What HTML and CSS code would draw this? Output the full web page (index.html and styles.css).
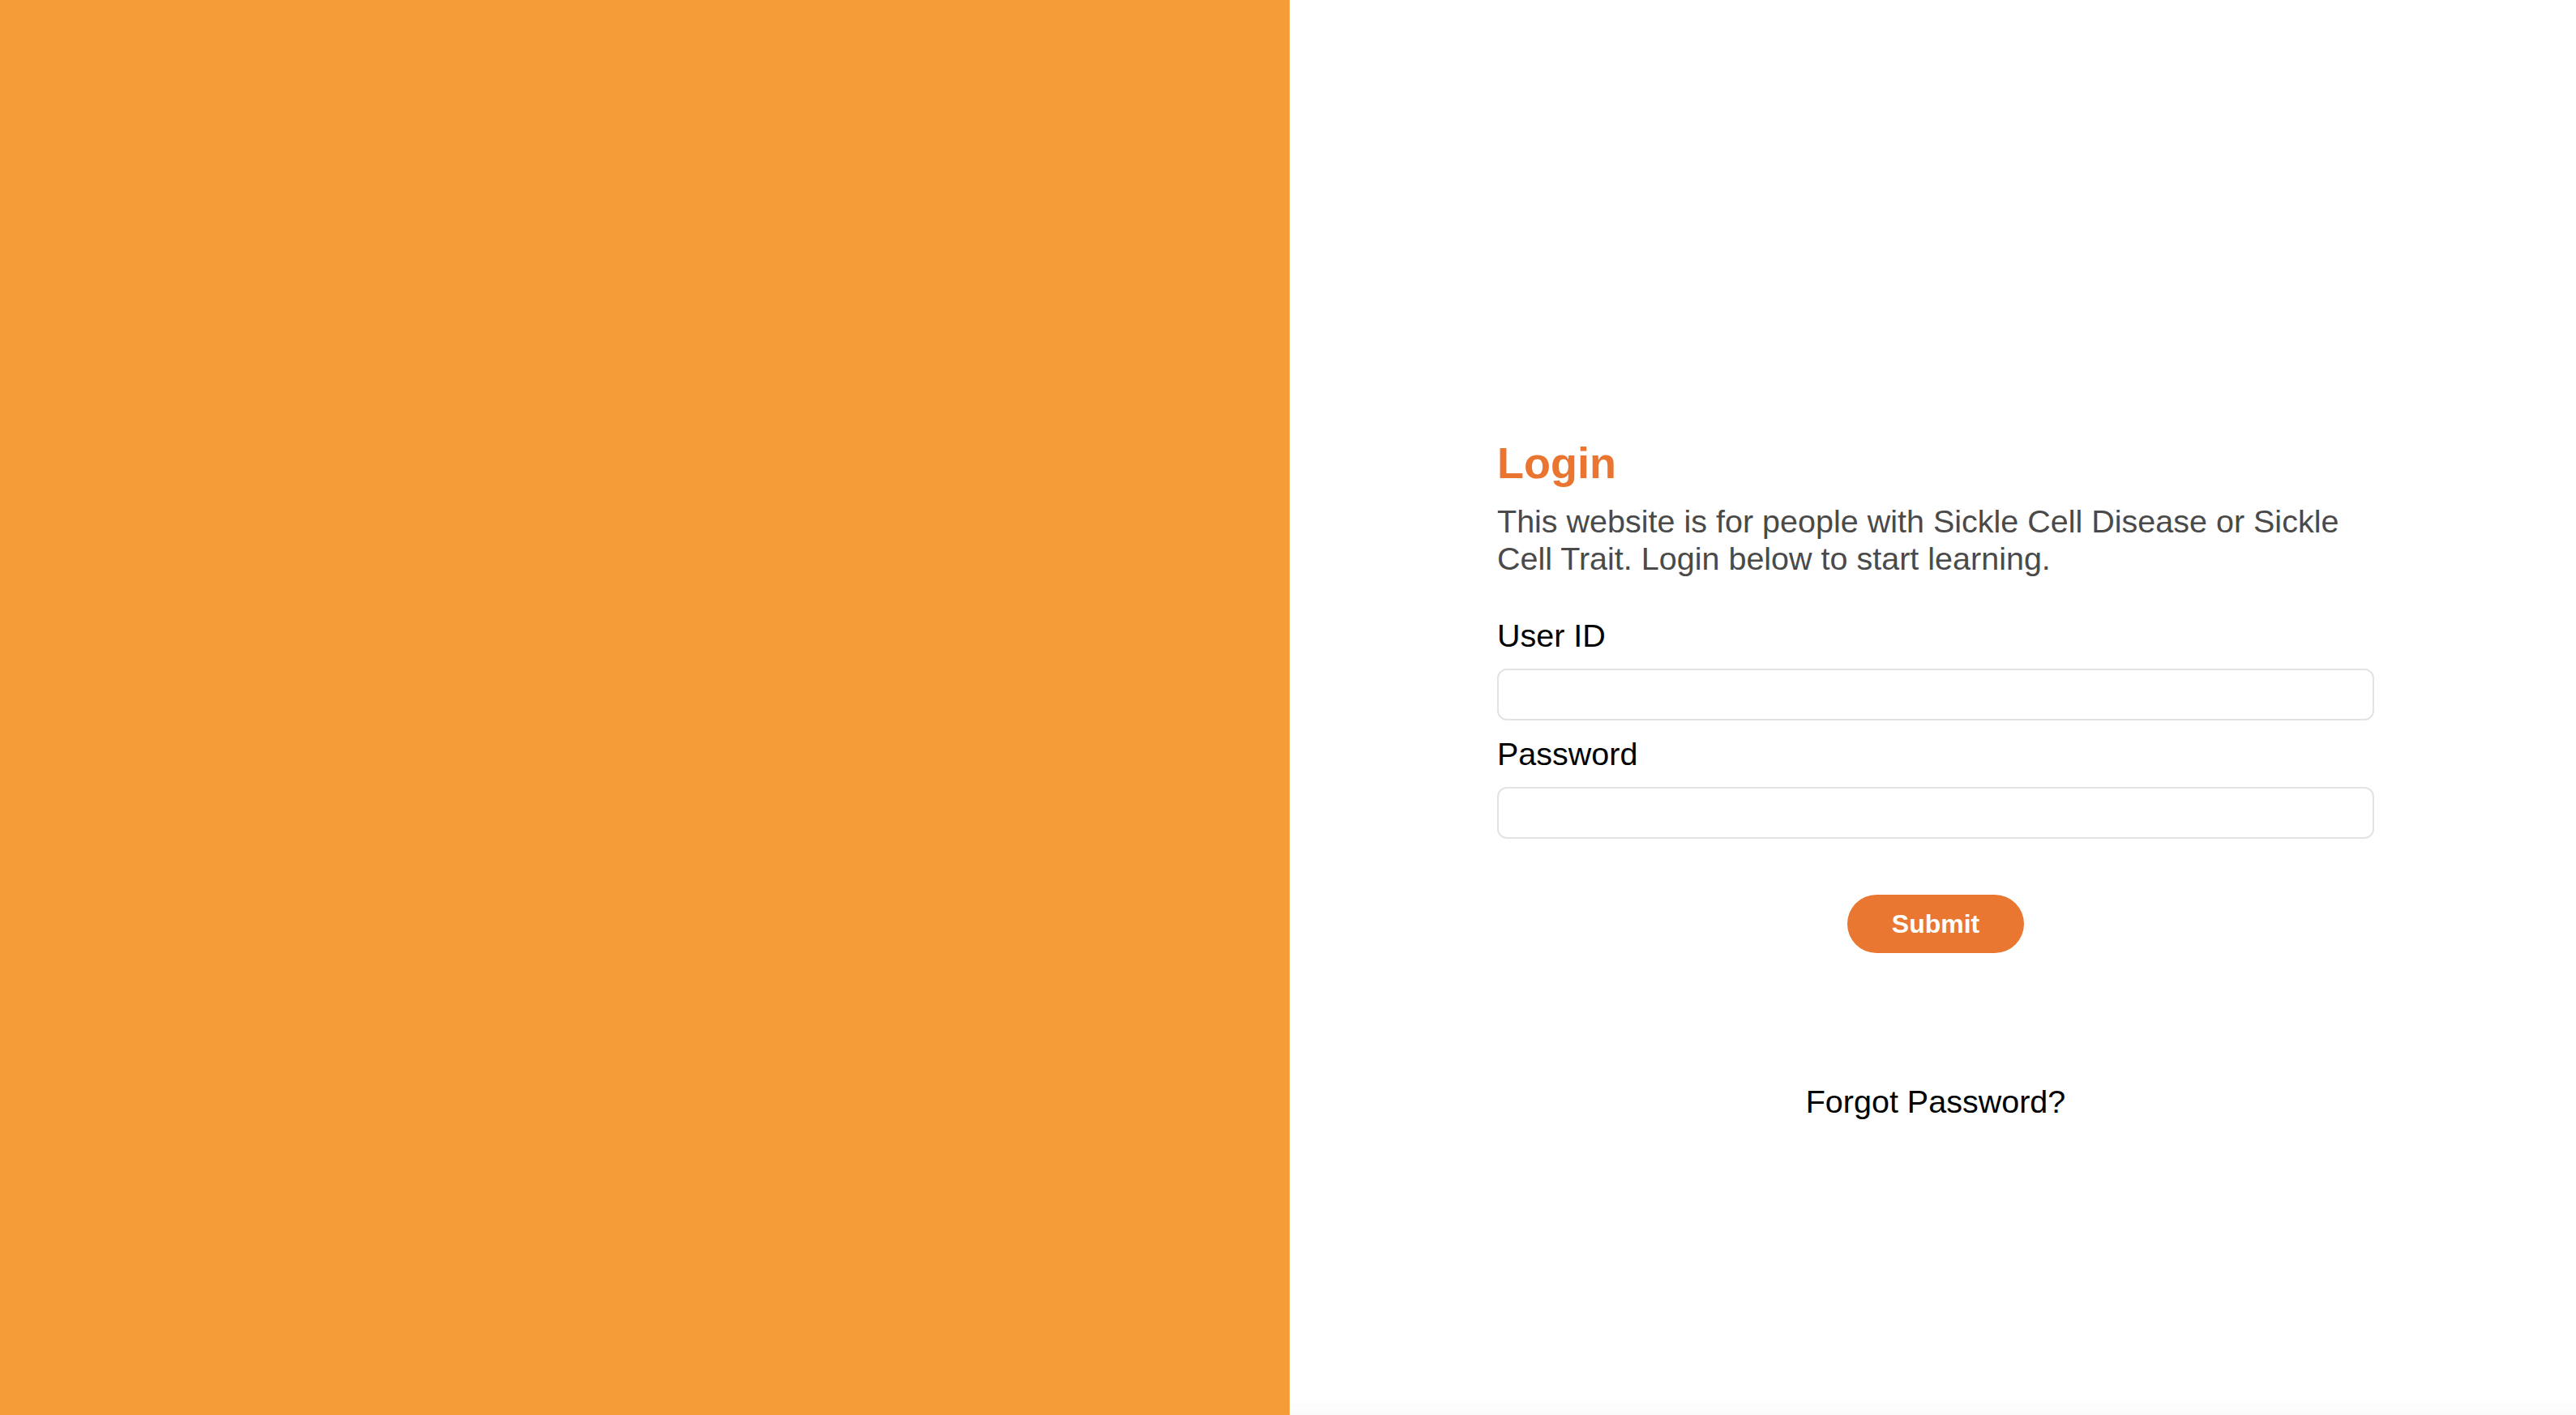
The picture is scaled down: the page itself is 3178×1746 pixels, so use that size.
FILE: index.html
```html
<!DOCTYPE html>
<html lang="en">
<head>
<meta charset="utf-8">
<title>Login</title>
<link rel="stylesheet" href="styles.css">
</head>
<body>
<div class="page">
  <div class="side"></div>
  <main class="panel">
    <form class="login">
      <h2 class="title">Login</h2>
      <p class="intro">This website is for people with Sickle Cell Disease or Sickle Cell Trait. Login below to start learning.</p>
      <label class="label label-first" for="uid">User ID</label>
      <input class="field" id="uid" type="text">
      <label class="label" for="pwd">Password</label>
      <input class="field" id="pwd" type="password">
      <div class="actions">
        <button class="submit" type="button">Submit</button>
      </div>
      <div class="forgot">Forgot Password?</div>
    </form>
  </main>
</div>
</body>
</html>
```

FILE: styles.css
```css
html, body {
  margin: 0;
  padding: 0;
  height: 100%;
}
body {
  font-family: "Liberation Sans", Arial, sans-serif;
  background: #ffffff;
}
.page {
  display: flex;
  height: 100vh;
}
.side {
  flex: 0 0 1591px;
  background: #f39c38;
}
.panel {
  flex: 1;
  padding: 540px 0 0 256px;
  background: linear-gradient(to bottom, #ffffff 0, #ffffff calc(100% - 22px), #fafafa 100%);
}
.login {
  width: 1082px;
  display: flex;
  flex-direction: column;
}
.title {
  margin: 0;
  font-size: 54px;
  font-weight: bold;
  color: #e97530;
  line-height: 63px;
}
.intro {
  margin: 17px 0 0;
  font-size: 39.5px;
  line-height: 46px;
  color: #4a4a4a;
}
.label {
  display: block;
  margin-top: 19px;
  font-size: 39.5px;
  line-height: 45px;
  color: #000;
}
.label-first {
  margin-top: 50px;
}
.field {
  box-sizing: border-box;
  margin: 18px 0 0;
  height: 64px;
  width: 100%;
  border: 2px solid #e3e3e3;
  border-radius: 12px;
  background: #fff;
  outline: none;
}
.actions {
  display: flex;
  justify-content: center;
  margin-top: 69px;
}
.submit {
  width: 218px;
  height: 72px;
  border: none;
  border-radius: 36px;
  background: #e97731;
  color: #fff;
  font-family: "Liberation Sans", Arial, sans-serif;
  font-weight: bold;
  font-size: 32px;
  padding: 0;
}
.forgot {
  margin-top: 161px;
  text-align: center;
  font-size: 39.5px;
  line-height: 45px;
  color: #000;
}
```
